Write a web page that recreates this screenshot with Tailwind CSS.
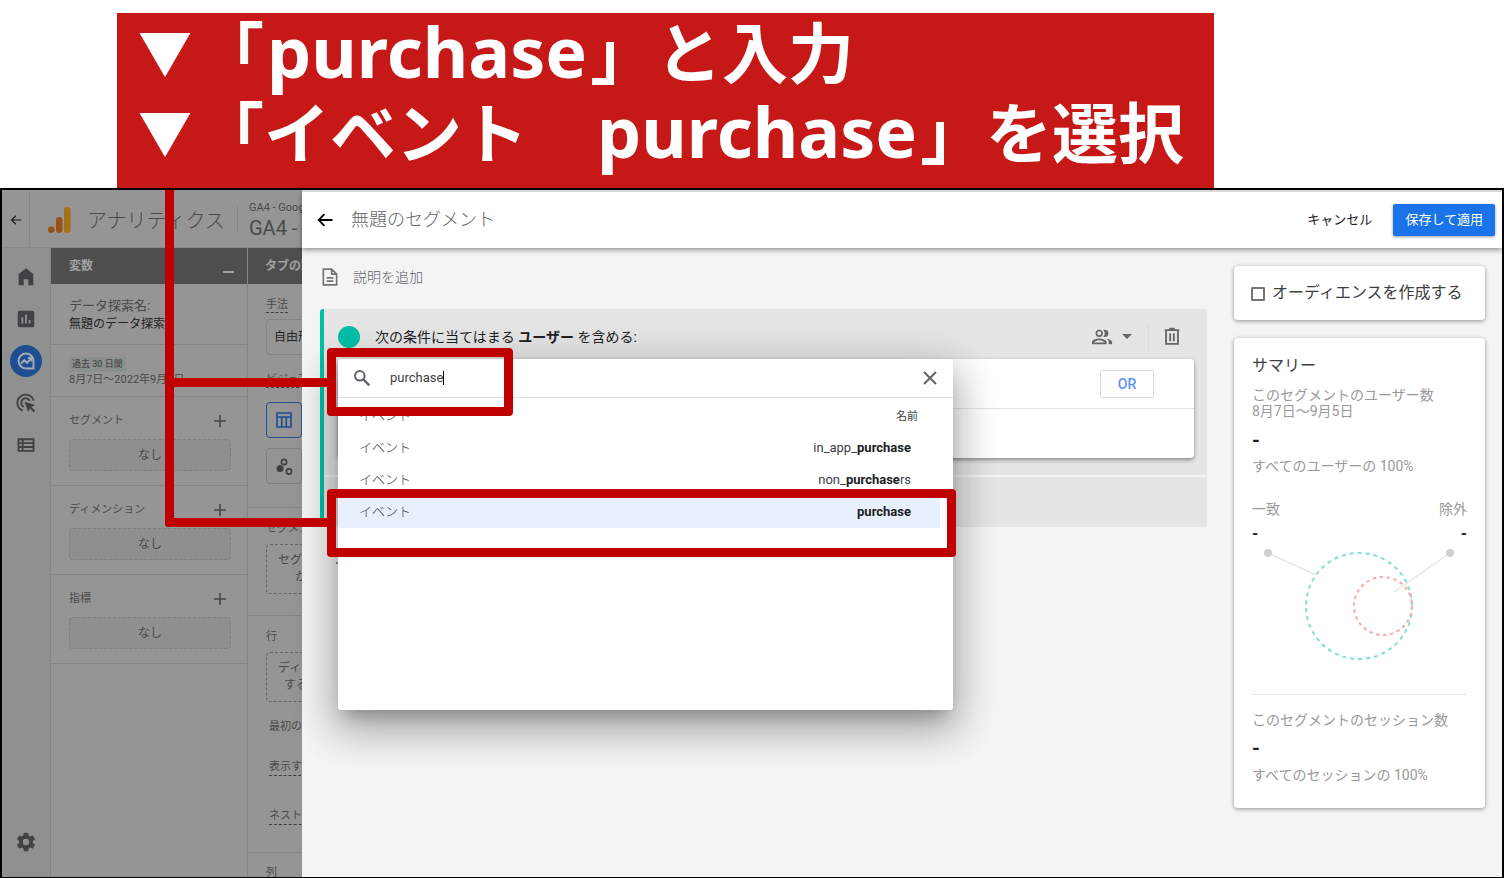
<!DOCTYPE html>
<html lang="ja">
<head>
<meta charset="utf-8">
<meta name="viewport" content="width=device-width, initial-scale=1">
<title>無題のセグメント</title>
<script src="https://cdn.jsdelivr.net/npm/@tailwindcss/browser@4"></script>
</head>
<body class="relative flex min-h-screen flex-col bg-white font-['Roboto','Noto_Sans_CJK_JP',sans-serif] text-sm text-[#3c4043]">

<!-- Instruction banner -->
<header class="pt-[13px] pl-[117px]">
  <div class="flex h-[176px] w-fit flex-col bg-[#c51817] pr-[30px] pl-[15px] font-['Noto_Sans_CJK_JP',sans-serif] text-[66px] leading-[80px] font-bold whitespace-nowrap text-white">
    <p class="-mt-1"><span class="inline-block w-[66px] pt-1 text-center align-top text-[54px] leading-[76px]">▼</span>「<span class="mx-[3px] font-['Noto_Sans',sans-serif] text-[70px] leading-none">purchase</span>」と入力</p>
    <p><span class="inline-block w-[66px] pt-1 text-center align-top text-[54px] leading-[76px]">▼</span>「イベント　<span class="mx-[3px] font-['Noto_Sans',sans-serif] text-[70px] leading-none">purchase</span>」を選択</p>
  </div>
</header>

<!-- Application window -->
<div class="-mt-px flex h-[690px] flex-1 overflow-hidden border-2 border-black">

  <!-- Dimmed analytics screen -->
  <div class="flex w-[300px] shrink-0 flex-col overflow-hidden bg-[#959595] whitespace-nowrap text-[#4a4a4a]">
    <div class="flex h-[58px] shrink-0 border-b border-[#8a8a8a] pt-0.5">
      <button class="flex w-7 shrink-0 items-center justify-center border-r border-[#868686] text-[#1c1c1c]" aria-label="戻る">
        <svg class="size-3.5" viewBox="0 0 24 24" fill="currentColor"><path d="M21 11H6.800l5.600-5.600L11 4l-8 8 8 8 1.400-1.400L6.800 13H21z"/></svg>
      </button>
      <svg class="mt-[15px] ml-[18px] h-[27px] w-6 shrink-0" viewBox="0 0 24 27"><rect x="16" y="0" width="6.500" height="26" rx="3.200" fill="#a47216"/><rect x="8" y="10" width="6.500" height="16" rx="3.200" fill="#985112"/><circle cx="3.300" cy="22.700" r="3.300" fill="#985112"/></svg>
      <p class="ml-[15px] w-[150px] shrink-0 pt-0.5 text-xl leading-[54px] font-light">アナリティクス</p>
      <div class="my-3.5 w-px shrink-0 bg-[#868686]"></div>
      <div class="ml-[11px] pt-[9px]">
        <p class="text-[11px] leading-3.5">GA4 - Google</p>
        <p class="text-xl leading-[26px]">GA4 - Google</p>
      </div>
    </div>

    <div class="flex flex-1">
      <nav class="flex w-[49px] shrink-0 flex-col items-center border-r border-[#848484] bg-[#8f9190] pt-2 pb-6 text-[#404244]">
        <a href="#" aria-label="ホーム" class="flex h-[42px] items-center"><svg class="size-[22px]" viewBox="0 0 24 24" fill="currentColor"><path d="M12 2.500 4 8.800V21h5.500v-6.500h5V21H20V8.800z"/></svg></a>
        <a href="#" aria-label="レポート" class="flex h-[42px] items-center"><svg class="size-[22px]" viewBox="0 0 24 24" fill="currentColor"><path d="M19 3H5a2 2 0 0 0-2 2v14a2 2 0 0 0 2 2h14a2 2 0 0 0 2-2V5a2 2 0 0 0-2-2zM9 17H7v-7h2zm4 0h-2V7h2zm4 0h-2v-4h2z"/></svg></a>
        <a href="#" aria-label="探索" class="flex h-[42px] items-center"><svg class="size-8" viewBox="0 0 32 32"><circle cx="16" cy="16" r="16" fill="#204e92"/><path d="M16 8.500a7.500 7.500 0 1 0 0 15h7.500V16A7.500 7.500 0 0 0 16 8.500z" fill="none" stroke="#a3a9b3" stroke-width="2"/><path d="m11 18.500 3.300-3.300 2.700 2.600 4-4.200M18 13h3.500v3.500" fill="none" stroke="#a3a9b3" stroke-width="2"/></svg></a>
        <a href="#" aria-label="広告" class="flex h-[42px] items-center"><svg class="size-[22px]" viewBox="0 0 24 24" fill="none" stroke="currentColor" stroke-width="2"><path d="M8.500 20.300A9 9 0 1 1 20.300 9.500"/><path d="M9.500 16.300A5 5 0 1 1 16.300 9.800"/><path d="m10.500 10.500 3.800 11.300 2-3.800 4 4 1.700-1.700-4-4 3.800-2z" fill="currentColor" stroke="none"/></svg></a>
        <a href="#" aria-label="設定リスト" class="flex h-[42px] items-center"><svg class="size-[20px]" viewBox="0 0 24 24" fill="none" stroke="currentColor" stroke-width="2"><path d="M3 5h18v14H3zM3 9.700h18M3 14.300h18M8 5v14" stroke-width="2.300"/></svg></a>
        <a href="#" aria-label="管理" class="mt-auto"><svg class="size-[22px]" viewBox="0 0 24 24" fill="currentColor"><path d="M19.400 13a7.500 7.500 0 0 0 0-2l2.200-1.600a.5.5 0 0 0 .1-.7l-2-3.500a.5.5 0 0 0-.6-.2l-2.500 1a7.600 7.600 0 0 0-1.700-1l-.4-2.600a.5.5 0 0 0-.5-.4h-4a.5.5 0 0 0-.5.400L9.100 5a7.600 7.600 0 0 0-1.700 1l-2.500-1a.5.5 0 0 0-.6.200l-2 3.500a.5.5 0 0 0 .1.700L4.600 11a7.500 7.500 0 0 0 0 2l-2.200 1.600a.5.5 0 0 0-.1.700l2 3.500c.1.200.4.300.6.200l2.500-1c.5.400 1.100.8 1.700 1l.4 2.600c0 .2.200.4.500.4h4c.2 0 .5-.2.500-.4l.4-2.600a7.600 7.600 0 0 0 1.700-1l2.500 1c.2.100.5 0 .6-.2l2-3.500a.5.5 0 0 0-.1-.7zM12 15.500a3.500 3.500 0 1 1 0-7 3.500 3.500 0 0 1 0 7z"/></svg></a>
      </nav>

      <section class="w-[197px] shrink-0 border-r border-[#848484] text-xs">
        <h2 class="flex h-9 items-center justify-between bg-[#4e4e4e] pr-[13px] pl-[18px] font-bold text-[#a0a0a0]">変数 <span class="mt-3 h-0.5 w-[11px] bg-[#a0a0a0]"></span></h2>
        <div class="h-[61px] border-b border-[#848484] pt-[13px] pl-[18px] leading-[18px]">
          <p class="text-[13px]">データ探索名:</p>
          <p class="text-[#242424]">無題のデータ探索</p>
        </div>
        <div class="h-[52px] border-b border-[#848484] pt-3 pl-[18px]">
          <p class="w-fit bg-[#8b8f8d] px-[3px] text-[9px] leading-[15px] font-medium">過去 30 日間</p>
          <p class="flex items-center text-[11px] leading-4">8月7日～2022年9月5日 <span class="ml-[30px] border-x-4 border-t-4 border-x-transparent border-t-[#404040]"></span></p>
        </div>
        <div class="h-[89px] border-b border-[#848484] pt-3.5 pr-4 pl-[18px]">
          <div class="flex h-5 items-center justify-between"><h3 class="text-[11px]">セグメント</h3><button aria-label="セグメントを追加"><svg class="mr-[5px] size-3" viewBox="0 0 12 12"><path d="M6 0v12M0 6h12" stroke="#484848" stroke-width="1.600"/></svg></button></div>
          <div class="mt-2 flex h-8 items-center justify-center rounded-sm border border-dashed border-[#808080] bg-[#8f8f8f]">なし</div>
        </div>
        <div class="h-[89px] border-b border-[#848484] pt-3.5 pr-4 pl-[18px]">
          <div class="flex h-5 items-center justify-between"><h3 class="text-[11px]">ディメンション</h3><button aria-label="ディメンションを追加"><svg class="mr-[5px] size-3" viewBox="0 0 12 12"><path d="M6 0v12M0 6h12" stroke="#484848" stroke-width="1.600"/></svg></button></div>
          <div class="mt-2 flex h-8 items-center justify-center rounded-sm border border-dashed border-[#808080] bg-[#8f8f8f]">なし</div>
        </div>
        <div class="h-[89px] border-b border-[#848484] pt-3.5 pr-4 pl-[18px]">
          <div class="flex h-5 items-center justify-between"><h3 class="text-[11px]">指標</h3><button aria-label="指標を追加"><svg class="mr-[5px] size-3" viewBox="0 0 12 12"><path d="M6 0v12M0 6h12" stroke="#484848" stroke-width="1.600"/></svg></button></div>
          <div class="mt-2 flex h-8 items-center justify-center rounded-sm border border-dashed border-[#808080] bg-[#8f8f8f]">なし</div>
        </div>
      </section>

      <section class="w-[196px] shrink-0 text-[11px] leading-4">
        <h2 class="flex h-9 items-center bg-[#4e4e4e] pl-[17px] text-xs font-bold text-[#a0a0a0]">タブの設定</h2>
        <div class="h-[224px] border-b border-[#848484] pt-[13px] pl-[18px]">
          <h3 class="h-4 w-fit border-b border-dashed border-[#404040]">手法</h3>
          <div class="mt-1.5 flex h-9 items-center rounded-sm border border-[#848484] pl-[7px] text-xs text-[#242424]">自由形式</div>
          <h3 class="mt-[17px] h-4 w-fit border-b border-dashed border-[#404040]">ビジュアリゼーション</h3>
          <div class="mt-3.5 flex size-9 items-center justify-center rounded-sm border border-[#2a528f] text-[#1d4b92]"><svg class="size-4" viewBox="0 0 16 16" fill="none" stroke="currentColor" stroke-width="1.600"><path d="M1 1h14v14H1zM1 5h14M5.700 5v10M10.300 5v10"/></svg></div>
          <div class="mt-2.5 flex size-9 items-center justify-center rounded-sm border border-[#808080] text-[#404040]"><svg class="size-[17px]" viewBox="0 0 17 17"><circle cx="8" cy="4" r="2.600" fill="none" stroke="currentColor" stroke-width="1.700"/><circle cx="13" cy="13.500" r="2.600" fill="none" stroke="currentColor" stroke-width="1.700"/><circle cx="4" cy="10.500" r="3.500" fill="currentColor"/></svg></div>
        </div>
        <div class="h-[108px] border-b border-[#848484] pt-[13px] pl-[18px]">
          <h3>セグメントの比較</h3>
          <div class="mt-[7px] h-[50px] w-40 rounded-sm border border-dashed border-[#666] px-[11px] pt-[7px] text-xs leading-[17px]">セグメントをドロップす<br><span class="ml-[17px]">か選択して</span></div>
        </div>
        <div class="h-[237px] border-b border-[#848484] pt-[13px] pl-[18px]">
          <h3>行</h3>
          <div class="mt-[7px] h-[50px] w-40 rounded-sm border border-dashed border-[#666] px-[11px] pt-[7px] text-xs leading-[17px]">ディメンションをドロッ<br><span class="ml-1.5">するか選択</span></div>
          <p class="mt-[17px] ml-[3px]">最初の行</p>
          <p class="mt-6 ml-[3px] w-fit border-b border-dashed border-[#404040]">表示する行数</p>
          <p class="mt-8 ml-[3px] w-fit border-b border-dashed border-[#404040]">ネストされた行</p>
        </div>
        <h3 class="h-6 overflow-hidden pt-3 pl-[18px]">列</h3>
      </section>
    </div>
  </div>

  <!-- Segment builder -->
  <main class="flex min-w-0 flex-1 flex-col bg-[#f4f4f4]">
    <div class="z-10 flex h-[58px] shrink-0 items-center border-t-2 border-[#d8d8d6] bg-white pr-[7px] pl-[14px] shadow-[0_2px_5px_rgba(0,0,0,0.4)]">
      <button aria-label="戻る" class="text-black"><svg class="size-[18px]" viewBox="0 0 24 24" fill="currentColor"><path d="M22 10.700H6.500l5.700-5.700L10.500 3.200 1.800 12l8.700 8.800 1.700-1.800-5.700-5.700H22z"/></svg></button>
      <h1 class="ml-[17px] flex-1 text-lg leading-7 font-light text-[#5f6368]">無題のセグメント</h1>
      <button class="text-[13px] text-[#202124]">キャンセル</button>
      <button class="ml-[21px] h-8 rounded-xs bg-[#1a73e8] px-3 text-[13px] text-white shadow-[0_1px_3px_rgba(0,0,0,0.4)]">保存して適用</button>
    </div>

    <div class="flex flex-1 gap-[27px] pr-[17px] pl-[18px]">
      <div class="relative min-w-0 flex-1 pt-[18px]">
        <div class="flex h-[22px] items-center">
          <svg class="size-5" viewBox="0 0 24 24" fill="none" stroke="#757575" stroke-width="2"><path d="M14 2.500H4v19h16V8.500zM14 2.500v6h6M8 13h8M8 17h8"/></svg>
          <p class="ml-[13px] font-light text-[#5f6368]">説明を追加</p>
        </div>
        <section class="mt-[21px] rounded-[3px] border-l-4 border-[#00bfa5]">
          <div class="h-[166px] rounded-tr-[3px] bg-[#e5e5e5] pr-[13px] pl-[14px]">
            <div class="flex h-[50px] items-center pt-[5px]">
              <span class="size-[22px] rounded-full bg-[#00bfa5]"></span>
              <p class="ml-[15px] flex-1 text-[#202124]">次の条件に当てはまる <b>ユーザー</b> を含める:</p>
              <button class="flex items-center" aria-label="スコープ">
                <svg class="size-[22px]" viewBox="0 0 24 24" fill="#666"><path d="M9 12a4 4 0 1 0 0-8 4 4 0 0 0 0 8zm0-6.200a2.200 2.200 0 1 1 0 4.400 2.200 2.200 0 0 1 0-4.400zM9 13.500c-2.700 0-8 1.300-8 4V20h16v-2.500c0-2.700-5.300-4-8-4zM3 18.100c.3-.9 3.300-2.600 6-2.600s5.700 1.700 6 2.600zM15 12a4 4 0 0 0 0-8c-.6 0-1.100.1-1.600.300a5.600 5.600 0 0 1 0 7.400c.5.200 1 .3 1.600.3zM17 13.800c1.400 1 2.300 2.100 2.300 3.700V20H23v-2.500c0-2-3-3.200-6-3.700z"/></svg>
                <span class="ml-[9px] border-x-[5px] border-t-[5px] border-x-transparent border-t-[#666]"></span>
              </button>
              <span class="ml-4 h-[26px] w-px bg-[#d9dadd]"></span>
              <button class="mr-[11px] ml-3" aria-label="削除"><svg class="size-[22px]" viewBox="0 0 24 24" fill="none" stroke="#666" stroke-width="2"><path d="M4 4.500h16M9 3h6M5.500 5v14.500h13V5M10 8v8.500M14 8v8.500"/></svg></button>
            </div>
            <div class="h-[99px] rounded-[4px] bg-white shadow-[0_2px_4px_rgba(0,0,0,0.4)]">
              <div class="flex h-[50px] items-center justify-end border-b border-[#e4e4e4] pr-10">
                <button class="h-7 w-[54px] rounded-[2px] border border-[#dadce0] font-medium text-[#5b92f5]">OR</button>
              </div>
            </div>
          </div>
          <div class="mt-0.5 h-[50px] rounded-br-[3px] bg-[#e5e5e5]"></div>
        </section>
        <div class="mt-[35px] ml-4 h-0.5 w-3 bg-[#6a8fe8]"></div>

        <!-- Search popup -->
        <div class="absolute top-[111px] left-[18px] h-[351px] w-[615px] rounded-[3px] bg-white shadow-[0_11px_15px_-7px_rgba(0,0,0,0.25),0_20px_38px_3px_rgba(0,0,0,0.2),0_9px_46px_8px_rgba(0,0,0,0.14)]">
          <div class="flex h-[39px] items-center border-b border-[#dfe1e5] pr-[15px] pl-[15px]">
            <svg class="size-[18px]" viewBox="0 0 18 18" fill="none" stroke="#5f6368" stroke-width="2"><circle cx="6.800" cy="6.800" r="4.800"/><path d="m10.500 10.500 5.800 5.800" stroke-width="2.400"/></svg>
            <div class="ml-[19px] flex flex-1 items-center text-[13px]">
              <input type="text" aria-label="検索" value="purchase" class="field-sizing-content p-0 text-[#3c4043] outline-none"><span class="h-3.5 w-px bg-black"></span>
            </div>
            <button aria-label="閉じる"><svg class="size-4" viewBox="0 0 16 16"><path d="m2 2 12 12M14 2 2 14" stroke="#5f6368" stroke-width="2"/></svg></button>
          </div>
          <table class="w-[602px] text-[13px]">
            <thead><tr class="h-[34px]"><th class="pt-0.5 pl-[21px] text-left font-light">イベント</th><th class="pt-1 pr-[22px] text-right text-[11px] font-normal">名前</th></tr></thead>
            <tbody>
              <tr class="h-8"><td class="pl-[21px] font-light">イベント</td><td class="pr-[29px] text-right">in_app_<b class="text-[#202124]">purchase</b></td></tr>
              <tr class="h-8"><td class="pl-[21px] font-light">イベント</td><td class="pr-[29px] text-right">non_<b class="text-[#202124]">purchase</b>rs</td></tr>
              <tr class="h-8 bg-[#e8f0fe]"><td class="pl-[21px] font-light">イベント</td><td class="pr-[29px] text-right"><b class="text-[#202124]">purchase</b></td></tr>
            </tbody>
          </table>
        </div>
      </div>

      <aside class="w-[251px] shrink-0 pt-[18px] text-[#9a9a9a]">
        <label class="flex h-[54px] items-center rounded-[4px] bg-white pl-[17px] text-base text-[#3c4043] shadow-[0_1px_4px_rgba(0,0,0,0.4)]">
          <input type="checkbox" class="mt-0.5 mr-[7px] size-3.5 appearance-none rounded-[1px] border-2 border-[#757575]">オーディエンスを作成する
        </label>
        <section class="mt-[18px] h-[470px] rounded-[4px] bg-white px-[18px] pt-4 shadow-[0_1px_4px_rgba(0,0,0,0.4)]">
          <h2 class="text-base leading-6 text-[#3c4043]">サマリー</h2>
          <p class="mt-[9px] leading-4">このセグメントのユーザー数<br>8月7日～9月5日</p>
          <p class="mt-[9px] text-xl leading-6 font-bold text-[#202124]">-</p>
          <p class="mt-1 leading-5">すべてのユーザーの 100%</p>
          <div class="mt-[23px] flex justify-between leading-5"><p>一致</p><p>除外</p></div>
          <div class="mt-[5px] flex justify-between text-base leading-5 font-bold text-[#202124]"><p>-</p><p>-</p></div>
          <svg class="h-[116px] w-full" viewBox="0 0 215 116" fill="none"><circle cx="107" cy="62" r="53" stroke="#7fe0d2" stroke-width="2" stroke-dasharray="4 4"/><circle cx="131" cy="62" r="29" stroke="#ffa9a9" stroke-width="2" stroke-dasharray="3.500 3.500"/><path d="m16 9 48 22M198 9l-56 39" stroke="#d8d8d8"/><circle cx="16" cy="9" r="4" fill="#cfcfcf"/><circle cx="198" cy="9" r="4" fill="#cfcfcf"/></svg>
          <hr class="mt-[34px] border-[#e4e4e4]">
          <p class="mt-[15px] leading-5">このセグメントのセッション数</p>
          <p class="mt-1.5 text-xl leading-6 font-bold text-[#202124]">-</p>
          <p class="mt-[5px] leading-5">すべてのセッションの 100%</p>
        </section>
      </aside>
    </div>
  </main>
</div>

<!-- Callout lines and frames -->
<div class="pointer-events-none absolute top-[190px] left-[165px] h-[337px] w-[168px] rounded-bl-[4px] border-b-[9px] border-l-[9px] border-[#c00000]"></div>
<div class="pointer-events-none absolute top-[378px] left-[165px] h-[9px] w-[168px] bg-[#c00000]"></div>
<div class="pointer-events-none absolute top-[348px] left-[327px] h-[68px] w-[186px] rounded-[4px] border-[9px] border-[#c00000]"></div>
<div class="pointer-events-none absolute top-[489px] left-[327px] h-[68px] w-[629px] rounded-[4px] border-[9px] border-[#c00000]"></div>
</body>
</html>
